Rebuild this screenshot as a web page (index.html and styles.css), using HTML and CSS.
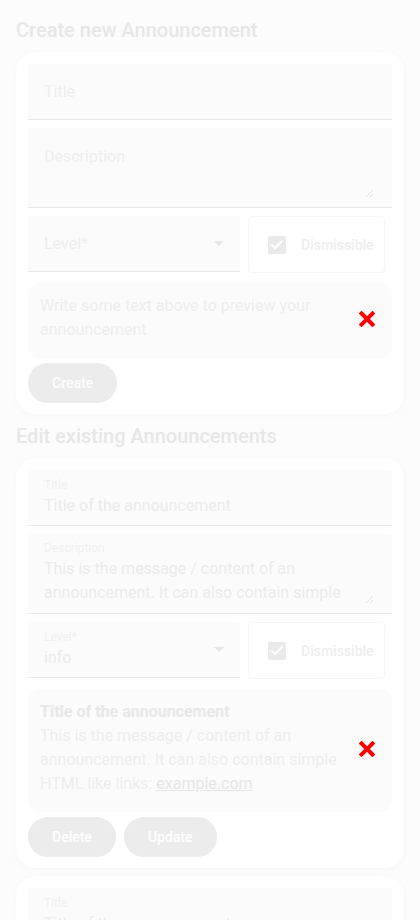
FILE: index.html
```html
<!DOCTYPE html>
<html lang="en">
<head>
<meta charset="utf-8">
<title>Announcements</title>
<link rel="stylesheet" href="styles.css">
</head>
<body>
<div class="page">
  <h2 class="heading">Create new Announcement</h2>
  <section class="card">
    <div class="field">
      <span class="placeholder">Title</span>
    </div>
    <div class="field field-area">
      <span class="placeholder">Description</span>
      <svg class="grip" width="9" height="9" viewBox="0 0 9 9"><path d="M8 1 1 8M8 5 5 8" stroke="#e4e4e4" stroke-width="1" fill="none"/></svg>
    </div>
    <div class="row">
      <div class="field field-select">
        <span class="placeholder">Level*</span>
        <svg class="arrow" width="10" height="5" viewBox="0 0 10 5"><path d="M0 0h10L5 5z" fill="#e6e6e6"/></svg>
      </div>
      <label class="dismiss">
        <span class="check"><svg width="14" height="11" viewBox="0 0 14 11"><path d="M1.5 5.5 5 9l7.5-7.5" stroke="#fff" stroke-width="2" fill="none"/></svg></span>
        <span class="dismiss-text">Dismissible</span>
      </label>
    </div>
    <div class="preview">
      <div class="preview-text">Write some text above to preview your announcement</div>
      <svg class="xmark" width="16" height="16" viewBox="0 0 16 16"><path d="M2.5 2.5 13.5 13.5M13.5 2.5 2.5 13.5" stroke="#f00" stroke-width="4" stroke-linecap="square" fill="none"/></svg>
    </div>
    <div class="actions">
      <button class="btn">Create</button>
    </div>
  </section>

  <h2 class="heading">Edit existing Announcements</h2>
  <div class="list">
    <section class="card">
      <div class="field filled">
        <span class="label">Title</span>
        <span class="value">Title of the announcement</span>
      </div>
      <div class="field field-area filled">
        <span class="label">Description</span>
        <span class="value value-area">This is the message / content of an announcement. It can also contain simple HTML like links: example.com</span>
        <svg class="grip" width="9" height="9" viewBox="0 0 9 9"><path d="M8 1 1 8M8 5 5 8" stroke="#e4e4e4" stroke-width="1" fill="none"/></svg>
      </div>
      <div class="row">
        <div class="field field-select filled">
          <span class="label">Level*</span>
          <span class="value">info</span>
          <svg class="arrow" width="10" height="5" viewBox="0 0 10 5"><path d="M0 0h10L5 5z" fill="#e6e6e6"/></svg>
        </div>
        <label class="dismiss">
          <span class="check"><svg width="14" height="11" viewBox="0 0 14 11"><path d="M1.5 5.5 5 9l7.5-7.5" stroke="#fff" stroke-width="2" fill="none"/></svg></span>
          <span class="dismiss-text">Dismissible</span>
        </label>
      </div>
      <div class="preview">
        <div class="preview-text"><strong class="preview-title">Title of the announcement</strong><br>This is the message / content of an announcement. It can also contain simple HTML like links: <a class="link" href="#">example.com</a></div>
        <svg class="xmark" width="16" height="16" viewBox="0 0 16 16"><path d="M2.5 2.5 13.5 13.5M13.5 2.5 2.5 13.5" stroke="#f00" stroke-width="4" stroke-linecap="square" fill="none"/></svg>
      </div>
      <div class="actions">
        <button class="btn">Delete</button>
        <button class="btn">Update</button>
      </div>
    </section>

    <section class="card">
      <div class="field filled">
        <span class="label">Title</span>
        <span class="value">Title of the announcement</span>
      </div>
      <div class="field field-area filled">
        <span class="label">Description</span>
        <span class="value value-area">This is the message / content of an announcement. It can also contain simple HTML like links: example.com</span>
      </div>
    </section>
  </div>
</div>
</body>
</html>
```

FILE: styles.css
```css
* { box-sizing: border-box; }

html, body {
  margin: 0;
  padding: 0;
  background: #fcfcfc;
  font-family: Roboto, "Liberation Sans", sans-serif;
  overflow: hidden;
}

.page {
  padding: 8px 16px;
}

.heading {
  margin: 6px 0;
  font-size: 20px;
  line-height: 32px;
  font-weight: 500;
  color: #e7e7e7;
}

.list {
  display: flex;
  flex-direction: column;
  gap: 8px;
}

.card {
  background: #fff;
  border-radius: 20px;
  box-shadow: 0 2px 10px rgba(0, 0, 0, 0.025), 0 0 2px rgba(0, 0, 0, 0.02);
  padding: 12px 12px 11px;
  display: flex;
  flex-direction: column;
  gap: 8px;
}

.field {
  position: relative;
  height: 56px;
  background: #fbfbfb;
  border-radius: 4px 4px 0 0;
  border-bottom: 1px solid #e8e8e8;
  padding: 0 16px;
  display: flex;
  flex-direction: column;
  justify-content: center;
}

.field-area {
  height: 80px;
  justify-content: flex-start;
  padding-top: 17px;
}

.placeholder {
  font-size: 16px;
  line-height: 24px;
  color: #eeeeee;
}

.filled {
  justify-content: flex-start;
  padding-top: 7px;
}

.field-area.filled {
  padding-top: 6px;
}

.label {
  font-size: 12px;
  line-height: 16px;
  color: #f0f0f0;
}

.value {
  font-size: 16px;
  line-height: 24px;
  color: #ebebeb;
  padding-top: 1px;
}

.value-area {
  padding-top: 1px;
  height: 49px;
  overflow: hidden;
  padding-right: 14px;
}

.grip {
  position: absolute;
  right: 18px;
  bottom: 9px;
}

.row {
  display: grid;
  grid-template-columns: 212px 137px;
  gap: 8px;
  align-items: start;
}

.field-select .arrow {
  position: absolute;
  right: 16px;
  top: 25px;
}

.dismiss {
  height: 57px;
  border: 1px solid #f6f6f6;
  border-radius: 4px;
  display: flex;
  align-items: center;
  padding-left: 19px;
  gap: 15px;
}

.check {
  width: 18px;
  height: 18px;
  border-radius: 2px;
  background: #eaeaea;
  display: flex;
  align-items: center;
  justify-content: center;
}

.dismiss-text {
  font-size: 14px;
  font-weight: 500;
  color: #eeeeee;
}

.preview {
  margin-top: 2px;
  background: #fbfbfb;
  border-radius: 12px;
  box-shadow: 0 0 3px rgba(0, 0, 0, 0.01);
  padding: 11px 17px 16px 12px;
  display: flex;
  align-items: center;
}

.preview-text {
  flex: 1;
  font-size: 16px;
  line-height: 24px;
  color: #ededed;
}

.preview-title {
  font-weight: 700;
  color: #e8e8e8;
}

.link {
  color: #e6e6e6;
  text-decoration: underline;
}

.xmark {
  flex: none;
  margin-left: 21px;
  margin-top: 2px;
}

.actions {
  display: flex;
  gap: 8px;
  margin-top: -3px;
}

.btn {
  height: 40px;
  border: none;
  border-radius: 20px;
  background: #ececec;
  color: #fff;
  font-family: Roboto, "Liberation Sans", sans-serif;
  font-size: 14px;
  font-weight: 500;
  padding: 0 24px;
}
```
